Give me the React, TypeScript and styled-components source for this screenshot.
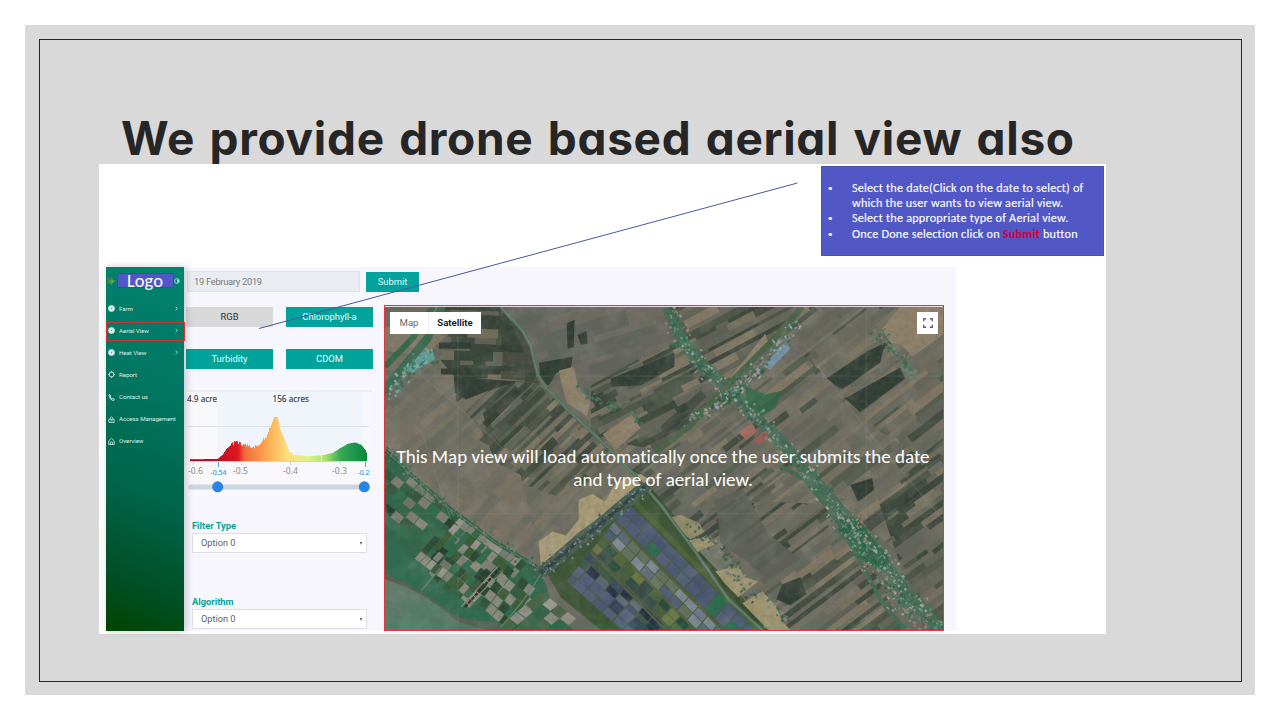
import React from "react";
import styled, { createGlobalStyle, css } from "styled-components";

const Global = createGlobalStyle`
  * { box-sizing: border-box; }
  body { margin: 0; background: #fff; overflow: hidden; }
`;

const calibri = `Carlito, Lato, "Open Sans", sans-serif`;
const ui = `Roboto, sans-serif`;

const Page = styled.div`
  width: 1280px;
  height: 720px;
  padding: 25px;
  background: #fff;
`;
const Slide = styled.main`
  height: 670px;
  padding: 14px 13px 13px 14px;
  background: #d9d9d9;
`;
const Frame = styled.div`
  height: 643px;
  border: 1px solid #262626;
  display: flex;
  flex-direction: column;
  align-items: flex-start;
  padding-left: 59px;
`;
const Title = styled.h1`
  height: 124px;
  margin: 0;
  padding: 68px 0 0 22px;
  font: 700 46px/60px Inter, sans-serif;
  font-feature-settings: "cv11" 1, "ss03" 1;
  letter-spacing: 0.68px;
  word-spacing: 2.8px;
  white-space: nowrap;
  color: #262626;
`;
const Picture = styled.section`
  position: relative;
  width: 1007px;
  height: 470px;
  background: #fff;
`;
const NoteRow = styled.div`
  height: 103px;
  padding: 2px 2px 0 0;
  display: flex;
  justify-content: flex-end;
`;
const Note = styled.ul`
  width: 283px;
  height: 90px;
  margin: 0;
  padding: 13px 0 0 30px;
  border: 1px solid #4a50b4;
  background: #5158c6;
  list-style: none;
  color: #fff;
  font: 400 12.2px/15.2px ${calibri};
  font-variant-ligatures: none;
  letter-spacing: 0.21px;
  -webkit-text-stroke: 0.12px currentColor;
  white-space: nowrap;
`;
const NoteItem = styled.li`
  display: flex;
  margin-left: -24px;
  &::before { content: "•"; width: 24px; flex: none; font-size: 9px; }
`;
const Hot = styled.b`
  color: #d4003c;
`;
const Shell = styled.div`
  display: flex;
  width: 850px;
  height: 364px;
  margin-left: 7px;
  background: #f6f6fc;
`;
const Sidebar = styled.nav`
  width: 78px;
  flex: none;
  background: linear-gradient(202deg, #008472 0%, #007560 35%, #006448 62%, #005028 84%, #004400 100%);
  box-shadow: 2px 0 7px rgba(60, 60, 80, 0.28);
  z-index: 1;
`;
const Brand = styled.div`
  height: 33px;
  display: flex;
  align-items: center;
  padding: 0 4px 6px 0;
  justify-content: space-between;
`;
const LogoBox = styled.div`
  width: 57px;
  height: 15px;
  border: 1px solid #41479c;
  background: #5158c6;
  display: flex;
  align-items: center;
  justify-content: center;
  color: #fff;
  font: 400 18.5px/15px ${calibri};
`;
const NavItem = styled.a<{ $active?: boolean }>`
  height: 19px;
  width: 79px;
  margin-bottom: 3.15px;
  padding: 0 6px 2px 1px;
  display: flex;
  align-items: center;
  border: 1px solid transparent;
  color: #d9efe9;
  font: 400 6.2px/8px ${ui};
  letter-spacing: -0.08px;
  white-space: nowrap;
  ${(p) => p.$active && css`border-color: #d03335;`}
`;
const NavIcon = styled.svg`
  width: 7px;
  height: 7px;
  flex: none;
  margin-right: 4px;
  fill: none;
  stroke: #d9efe9;
`;
const Chevron = styled.svg`
  width: 3px;
  height: 5px;
  margin-left: auto;
  fill: none;
  stroke: #d9efe9;
`;
const Main = styled.div`
  flex: 1;
  display: flex;
  flex-direction: column;
`;
const TopRow = styled.div`
  height: 38px;
  padding: 4px 0 0 3px;
  display: flex;
  gap: 6px;
`;
const DateField = styled.div`
  width: 173px;
  height: 21px;
  padding-left: 6px;
  border: 1px solid #dfe2e6;
  background: #e9edf1;
  color: #75797e;
  font: 400 9.3px/20px ${ui};
  letter-spacing: -0.27px;
`;
const Button = styled.button<{ $muted?: boolean; $width?: number }>`
  width: ${(p) => p.$width ?? 87}px;
  height: 20px;
  padding: 0;
  border: 0;
  background: ${(p) => (p.$muted ? "#d8d8d8" : "#00a29b")};
  color: ${(p) => (p.$muted ? "#333" : "#e9fbfa")};
  font: 400 9.4px/20px ${ui};
`;
const SubmitButton = styled(Button)`
  margin-top: 1px;
`;
const Body = styled.div`
  display: flex;
  height: 326px;
`;
const Controls = styled.div`
  width: 200px;
  flex: none;
  padding: 2px 0 0 2px;
`;
const Buttons = styled.div`
  display: grid;
  grid-template-columns: 87px 87px;
  gap: 22px 13px;
`;
const Chart = styled.svg`
  display: block;
  margin-top: 20px;
  width: 190px;
  height: 112px;
`;
const Field = styled.label`
  display: block;
  width: 175px;
  height: 76px;
  margin-left: 6px;
  padding-top: 18px;
  color: #00a29b;
  font: 700 9.3px/14px ${ui};
`;
const Select = styled.div`
  height: 20px;
  padding: 0 4px 0 8px;
  border: 1px solid #dedfe5;
  display: flex;
  align-items: center;
  justify-content: space-between;
  background: #fff;
  color: #5b6066;
  font: 400 9.2px/18px ${ui};
`;
const Caret = styled.i`
  border: 1.5px solid transparent;
  border-top: 3px solid #444;
  border-bottom: 0;
`;
const MapView = styled.div`
  position: relative;
  width: 560px;
  height: 326px;
  padding-top: 1px;
  border: 1px solid #e0383c;
  background: #ecd9de;
`;
const MapCanvas = styled.svg`
  display: block;
  width: 558px;
  height: 323px;
`;
const MapTypes = styled.div`
  position: absolute;
  left: 5px;
  top: 6px;
  height: 22px;
  display: flex;
  background: #fff;
  color: #666;
  font: 400 9.6px/21px ${ui};
`;
const MapType = styled.span<{ $on?: boolean }>`
  width: ${(p) => (p.$on ? 53 : 38)}px;
  text-align: center;
  ${(p) => p.$on && css`border-left: 1px solid #eee; color: #111; font-weight: 600;`}
`;
const FullScreen = styled.div`
  position: absolute;
  right: 5px;
  top: 6px;
  width: 21px;
  height: 22px;
  display: flex;
  align-items: center;
  justify-content: center;
  background: #fff;
`;
const MapMessage = styled.p`
  position: absolute;
  inset: 139px 2px auto 0;
  margin: 0;
  text-align: center;
  color: #fff;
  font: 400 19px/23px ${calibri};
  font-variant-ligatures: none;
  letter-spacing: 0.02px;
  white-space: nowrap;
`;
const Pointer = styled.svg`
  position: absolute;
  left: 0;
  top: 0;
  width: 1007px;
  height: 470px;
  pointer-events: none;
`;

type Pt = [number, number];
function rng(seed: number) {
  let s = seed;
  return () => {
    s = (s * 1664525 + 1013904223) % 4294967296;
    return s / 4294967296;
  };
}
const str = (p: Pt[]) => p.map((q) => q.join(",")).join(" ");

const earth = ["#716e5f", "#68675c", "#5e6156", "#4c5648", "#3f493f", "#797262", "#867b68", "#6d6b60", "#64665d", "#535b4d"];
const plain = ["#767364", "#6f6e62", "#6e6c64", "#797366", "#676960", "#727063"];
const woods = ["#384339", "#404a3f", "#4b5445", "#66655a", "#374238"];

function Patch({ id, area, angle, colors, seed, base, w = 60, h = 7 }: {
  id: string; area: Pt[]; angle: number; colors: string[]; seed: number; base: string; w?: number; h?: number;
}) {
  const r = rng(seed);
  const cx = area.reduce((a, p) => a + p[0], 0) / area.length;
  const cy = area.reduce((a, p) => a + p[1], 0) / area.length;
  const R = Math.max(...area.map((p) => Math.hypot(p[0] - cx, p[1] - cy)));
  const out: React.ReactNode[] = [];
  let y = -R;
  while (y < R) {
    const hh = h * (0.35 + r() * 0.9);
    let x = -R - r() * w;
    while (x < R) {
      const ww = w * (0.25 + r() * 0.9);
      out.push(<rect key={out.length} x={cx + x} y={cy + y} width={ww} height={hh + 0.3} fill={colors[Math.floor(r() * colors.length)]} />);
      x += ww;
    }
    y += hh;
  }
  return (
    <g clipPath={`url(#${id})`}>
      <clipPath id={id}><polygon points={str(area)} /></clipPath>
      <polygon points={str(area)} fill={base} />
      <g transform={`rotate(${angle} ${cx} ${cy})`} opacity={0.85}>{out}</g>
    </g>
  );
}

function Village({ line, spread, count, colors, seed, size = 3 }: {
  line: Pt[]; spread: number; count: number; colors: string[]; seed: number; size?: number;
}) {
  const r = rng(seed);
  return (
    <g>
      {Array.from({ length: count }, (_, i) => {
        const t = r() * (line.length - 1);
        const k = Math.floor(t);
        const f = t - k;
        const x = line[k][0] + (line[k + 1][0] - line[k][0]) * f + (r() + r() - 1) * spread;
        const y = line[k][1] + (line[k + 1][1] - line[k][1]) * f + (r() + r() - 1) * spread;
        return <rect key={i} x={x} y={y} width={size * (0.4 + r())} height={size * (0.4 + r() * 0.7)} fill={colors[Math.floor(r() * colors.length)]} transform={`rotate(${r() > 0.5 ? -42 : 45} ${x} ${y})`} opacity={0.85} />;
      })}
    </g>
  );
}

function Ponds({ origin, u, v, cols, rows, colors, seed, skip = 0 }: {
  origin: Pt; u: Pt; v: Pt; cols: number; rows: number; colors: string[]; seed: number; skip?: number;
}) {
  const r = rng(seed);
  const cells: React.ReactNode[] = [];
  for (let i = 0; i < cols; i++)
    for (let j = 0; j < rows; j++) {
      if (r() < skip) continue;
      const at = (a: number, b: number): Pt => [origin[0] + u[0] * a + v[0] * b, origin[1] + u[1] * a + v[1] * b];
      cells.push(<polygon key={`${i}-${j}`} points={str([at(i, j), at(i + 0.92, j), at(i + 0.92, j + 0.92), at(i, j + 0.92)])} fill={colors[Math.floor(r() * colors.length)]} />);
    }
  return <g>{cells}</g>;
}

const village = ["#8fa5a0", "#28704f", "#347555", "#a9aba0", "#2b6647", "#6b8d86", "#a97f74", "#547565", "#23614a"];
const northRoad: Pt[] = [[500, 306], [522, 330], [530, 345], [537, 374], [545, 387], [570, 412], [605, 445], [635, 476], [660, 505], [692, 548], [728, 600], [765, 634]];
const mainRoad: Pt[] = [[668, 306], [680, 338], [700, 362], [728, 388], [755, 415], [785, 447], [812, 478], [848, 520], [875, 550], [905, 592], [943, 632]];
const crossRoad: Pt[] = [[802, 306], [772, 340], [730, 382], [690, 425], [655, 452]];
const canal: Pt[] = [[384, 450], [405, 470], [445, 506], [495, 543], [540, 570]];
const dockRoad: Pt[] = [[540, 574], [570, 548], [605, 520], [645, 486]];

const Satellite = () => (
  <MapCanvas viewBox="384 306 559 325" preserveAspectRatio="none">
    <defs>
      <filter id="grain" x="0" y="0" width="100%" height="100%">
        <feTurbulence type="fractalNoise" baseFrequency="0.2" numOctaves="3" seed="8" />
        <feColorMatrix values="0 0 0 0 .1  0 0 0 0 .14  0 0 0 0 .11  1.6 0 0 0 -0.62" />
      </filter>
      <filter id="glint" x="0" y="0" width="100%" height="100%">
        <feTurbulence type="fractalNoise" baseFrequency="0.05" numOctaves="4" seed="21" />
        <feColorMatrix values="0 0 0 0 .6  0 0 0 0 .6  0 0 0 0 .54  1.8 0 0 0 -0.8" />
      </filter>
      <filter id="soft"><feGaussianBlur stdDeviation="0.6" /></filter>
      <linearGradient id="water" x1="0" y1="0" x2="1" y2="0.6">
        <stop offset="0" stopColor="#6c7b6e" /><stop offset=".6" stopColor="#527c69" /><stop offset="1" stopColor="#5c7063" />
      </linearGradient>
    </defs>
    <g filter="url(#soft)">
      <rect x="384" y="306" width="559" height="326" fill="#6a695e" />
      <Patch id="a1" area={[[384, 306], [498, 306], [500, 382], [455, 378], [384, 378]]} angle={2} colors={plain} seed={5} base="#70695a" w={50} h={9} />
      <Patch id="a2" area={[[440, 306], [500, 306], [524, 334], [540, 384], [518, 384], [498, 378], [440, 377]]} angle={2} colors={[...woods, "#6d6757", "#7b735f"]} seed={11} base="#434c40" w={40} h={9} />
      <Patch id="a3" area={[[384, 410], [412, 376], [440, 360], [455, 378], [455, 396], [477, 420], [515, 490], [460, 514], [384, 450]]} angle={-40} colors={plain} seed={3} base="#77705f" w={70} h={8} />
      <Patch id="a4" area={[[455, 378], [540, 383], [570, 412], [620, 462], [560, 500], [505, 480], [480, 430], [455, 400]]} angle={-44} colors={[...woods, ...earth]} seed={17} base="#5d5e51" w={36} h={5} />
      <Patch id="a5" area={[[502, 306], [665, 306], [676, 338], [612, 378], [580, 370], [540, 385]]} angle={-17} colors={["#64655e", "#69675f", "#60645c", "#706d63"]} seed={8} base="#65665d" w={60} h={13} />
      <Patch id="a6" area={[[590, 385], [675, 338], [728, 388], [660, 450], [628, 466], [590, 430]]} angle={-27} colors={[...woods, ...earth]} seed={9} base="#59594d" w={40} h={6} />
      <Patch id="a7" area={[[668, 306], [805, 306], [735, 385], [700, 360]]} angle={-28} colors={[...woods, ...earth]} seed={31} base="#5c5d50" w={40} h={7} />
      <Patch id="a8" area={[[800, 306], [943, 306], [943, 460], [875, 440], [820, 370], [780, 340]]} angle={-38} colors={[...earth, ...plain, "#867b68"]} seed={23} base="#606152" w={50} h={7} />
      <Patch id="a9" area={[[735, 386], [785, 340], [820, 370], [878, 430], [943, 470], [943, 590], [848, 510], [790, 450]]} angle={-38} colors={[...plain, ...plain, ...earth]} seed={40} base="#6b695b" w={60} h={7} />
      <Patch id="a10" area={[[600, 440], [660, 450], [728, 390], [790, 455], [835, 510], [760, 520], [690, 548], [655, 500]]} angle={-38} colors={[...earth, ...plain]} seed={29} base="#66665a" w={50} h={6} />
      <Patch id="a11" area={[[690, 545], [715, 500], [840, 505], [905, 631], [765, 631], [728, 600]]} angle={-37} colors={[...woods, ...earth, ...plain]} seed={60} base="#5c5e51" w={56} h={6} />
      <Patch id="a12" area={[[460, 514], [505, 478], [560, 498], [620, 465], [650, 480], [580, 530], [540, 570]]} angle={-48} colors={plain} seed={14} base="#77705f" w={56} h={8} />
      <Patch id="a13" area={[[384, 450], [455, 514], [400, 465], [470, 450], [520, 475], [540, 560], [495, 542]]} angle={-46} colors={plain} seed={18} base="#77705f" w={60} h={9} />
      <Patch id="a14" area={[[878, 500], [943, 440], [943, 628], [905, 580]]} angle={-36} colors={[...woods, ...earth]} seed={44} base="#5c5d50" w={44} h={6} />

      <polygon points="716,500 742,488 768,534 800,560 765,580 744,560 720,545" fill="#5e6058" opacity=".85" />
      <g fill="#323e35">
        <polygon points="566,322 574,319 573,346 567,348" />
        <polygon points="577,334 586,330 587,343 580,344" />
        <polygon points="440,368 500,368 500,374 440,374" />
        <polygon points="438,342 470,341 470,348 438,348" />
        <polygon points="453,376 468,377 515,381 488,390 465,399 454,392" />
        <polygon points="538,362 572,356 570,368 556,372 548,385 540,380" />
        <polygon points="610,378 650,362 674,352 674,366 640,385 612,386" />
        <polygon points="826,378 868,350 885,342 880,362 842,389" />
        <polygon points="845,398 900,367 905,378 860,412" />
        <polygon points="782,585 800,578 806,595 790,606 776,600" />
        <polygon points="850,485 872,478 874,490 858,502" />
        <polygon points="497,308 515,323 530,345 537,372 532,381 500,378 502,350" opacity=".65" />
        <polygon points="482,413 515,386 519,394 486,428" opacity=".75" />
        <polygon points="478,440 540,385 545,394 490,446" opacity=".55" />
        <polygon points="660,426 700,390 706,396 664,438" opacity=".6" />
        <polygon points="863,522 925,478 929,486 870,532" opacity=".6" />
      </g>
      <g fill="#8f8069">
        <polygon points="558,370 573,366 577,384 590,402 586,416 566,402 562,388" />
        <polygon points="602,434 631,414 640,428 615,450" />
        <polygon points="729,378 765,333 768,342 738,378" />
        <polygon points="882,328 900,306 943,306 943,334 912,356 902,344 890,342" />
        <polygon points="384,326 450,326 450,332 420,356 384,350" opacity=".6" />
      </g>

      <polygon points="384,450 405,470 445,506 495,543 540,570 560,631 384,631" fill="#31664c" />
      <Ponds origin={[392, 462]} u={[9, 7]} v={[-6, 7]} cols={14} rows={6} skip={0.25} seed={12} colors={["#2d5a3f", "#263f31", "#7d7d6f", "#2f6a49", "#8b897c", "#37573f", "#6e7568"]} />
      <Ponds origin={[455, 512]} u={[5.5, 4]} v={[-7, 8]} cols={13} rows={8} skip={0.3} seed={77} colors={["#8b897d", "#2a4636", "#97948a", "#2d6a4c", "#7f8074", "#3b5a36"]} />
      <polygon points="384,500 392,538 425,570 440,588 462,600 470,612 505,612 530,575 545,600 500,631 384,631" fill="#2d6c50" opacity=".9" />
      <Ponds origin={[500, 560]} u={[7, 6]} v={[-6, 8]} cols={6} rows={5} skip={0.15} seed={5} colors={["#2a4a30", "#8b897d", "#3b5a36", "#31573c"]} />
      <Ponds origin={[540, 592]} u={[9, 7]} v={[-8, 7]} cols={5} rows={6} skip={0.1} seed={6} colors={["#8e8e83", "#35634a", "#9a9a90", "#4b6447"]} />
      <path d="M384 574C405 584 425 594 445 610C462 624 480 620 500 624L503 632L384 632Z" fill="#585e54" />
      <path d="M384 580C410 588 430 600 446 614C456 624 470 627 490 632L384 632Z" fill="url(#water)" />
      <path d="M460 608L497 567M467 606L500 574" stroke="#8c8a78" strokeWidth="1.2" />
      <path d="M464 608L499 569" stroke="#26332a" strokeWidth="2.4" strokeDasharray="4 1" />
      <path d="M420 592L440 568M500 628Q525 600 540 575" stroke="#688270" strokeWidth="1.2" fill="none" />

      <polygon points="540,566 538,542 552,532 565,536 578,520 578,500 592,494 604,502 616,482 640,474 650,480 610,510 575,535 553,558" fill="#a89a74" />
      <polygon points="545,572 590,528 645,482 662,506 765,631 600,631 560,598" fill="#3e5436" />
      <polygon points="628,504 755,631 620,631 566,582" fill="#4b5644" />
      <clipPath id="block"><polygon points="628,504 757,631 622,631 566,582" /></clipPath>
      <g clipPath="url(#block)">
        <Ponds origin={[628, 504]} u={[10, 10]} v={[-7, 8]} cols={14} rows={2} seed={91} colors={["#4c5a75", "#455370", "#546078", "#475472", "#4c5a75", "#2c6c50"]} />
        <Ponds origin={[613, 521]} u={[9.5, 9.6]} v={[-6, 7]} cols={14} rows={2} seed={22} colors={["#5d6878", "#6b7485", "#4c5a6f", "#7f8891", "#64705c"]} />
        <Ponds origin={[600, 536]} u={[9, 9]} v={[-6, 6]} cols={14} rows={2} seed={34} colors={["#2c4b3c", "#46603a", "#55663b", "#344c47", "#68763f"]} />
        <Ponds origin={[587, 550]} u={[9.5, 9.5]} v={[-6, 7]} cols={12} rows={2} seed={55} colors={["#27334a", "#3c4966", "#5c6672", "#25313e", "#3b5644", "#505d78"]} />
        <Ponds origin={[575, 564]} u={[10, 9]} v={[-8, 8]} cols={11} rows={3} seed={66} colors={["#4c5875", "#55607a", "#364259", "#4b5872", "#2c5148"]} />
        <path d="M612 520L722 631M600 534L695 631M586 549L665 631" stroke="#535f3a" strokeWidth="2.3" />
      </g>
      <path d="M635 503L758 631" stroke="#4b5f36" strokeWidth="5" />
      <path d="M648 490L762 628" stroke="#364b2a" strokeWidth="7" opacity=".8" />
      <g fill="#a0956f">
        <polygon points="669,518 680,515 698,523 704,532 690,540 678,530" opacity=".85" />
        <polygon points="688,541 706,537 714,545 696,553" />
        <polygon points="715,572 738,566 744,578 758,582 738,598 725,585" />
        <polygon points="742,604 762,592 775,606 782,622 790,631 768,631" />
      </g>
      <polygon points="698,551 716,545 732,562 718,572" fill="#737668" />

      <polygon points="384,382 425,333 437,306 445,306 430,340 384,395" fill="#3b6a53" />
      <polygon points="405,370 420,352 432,350 434,358 408,374" fill="#5fa09a" />
      <Village line={[[388, 395], [405, 370], [430, 352]]} spread={10} count={70} colors={["#78b4ae", "#2d6b50", "#4f8f82", "#3b6b52", "#9aa59a"]} seed={4} />
      <polyline points="384,366 412,337 432,306" stroke="#35674b" strokeWidth="6" fill="none" />

      <g fill="none" strokeLinejoin="round">
        <polyline points={str(northRoad)} stroke="#526f5e" strokeWidth="3.4" />
        <polyline points={str(northRoad)} stroke="#7d8c7b" strokeWidth=".8" />
        <polyline points={str(mainRoad)} stroke="#3f6c56" strokeWidth="12" opacity=".7" />
        <polyline points="780,466 805,480 835,518 858,558 880,600 905,631" stroke="#466a55" strokeWidth="4" />
        <polyline points={str(crossRoad)} stroke="#4c6246" strokeWidth="6" />
        <polyline points={str(canal)} stroke="#2f5f46" strokeWidth="4" />
        <polyline points={str(canal)} stroke="#61806b" strokeWidth="1" />
        <polyline points={str(dockRoad)} stroke="#495e52" strokeWidth="12" />
        <polyline points={str(dockRoad)} stroke="#323f47" strokeWidth="3.5" />
        <path d="M800 338L822 372L875 440L943 520M412 368L455 404L520 465M712 410L740 440M420 430L450 520" stroke="#8a8570" strokeWidth=".8" opacity=".6" />
        <path d="M384 375.500H943M384 514H943M457 306V631M866 306V631" stroke="#a3a698" strokeWidth=".5" opacity=".35" />
      </g>
      <polygon points="746,386 765,394 782,390 775,408 760,416 745,402" fill="#2b6846" opacity=".8" />
      <polygon points="840,530 858,520 890,560 880,572 862,560" fill="#32664b" />
      <polygon points="763,366 785,341 790,348 770,369" fill="#7792ab" />
      <polygon points="738,432 752,423 756,431 746,440" fill="#a4685b" />
      <polygon points="752,440 766,430 768,437 760,444" fill="#9c5a55" />
      <Village line={mainRoad} spread={11} count={620} colors={village} seed={2} size={2.6} />
      <Village line={[[690, 420], [730, 392], [760, 365], [795, 322]]} spread={9} count={230} colors={[...village, "#8fa5c0", "#a9a8b8"]} seed={16} size={2.6} />
      <Village line={[[835, 515], [865, 550], [890, 590], [925, 631]]} spread={16} count={320} colors={village} seed={19} size={2.6} />
      <Village line={dockRoad} spread={9} count={180} colors={["#77859a", "#385b45", "#55684b", "#8e979f", "#324d3b"]} seed={13} size={2.4} />
      <Village line={[[640, 430], [630, 410], [600, 400], [575, 385]]} spread={5} count={40} colors={["#2f6a4b", "#4c7c66", "#3b6a50"]} seed={26} />
      <Village line={canal} spread={7} count={180} colors={["#2e6649", "#78857a", "#3b7556", "#8a7c74"]} seed={37} size={2.4} />
      <Village line={[[872, 328], [885, 340], [900, 355], [915, 378]]} spread={8} count={70} colors={["#2f6a4b", "#4c7c66", "#3b6a50", "#70887a"]} seed={38} />
      <Village line={[[690, 523], [725, 555], [745, 590], [790, 620]]} spread={9} count={90} colors={["#2f5a44", "#6c7c86", "#43674f", "#8e8a7a"]} seed={39} />
    </g>
    <rect x="384" y="306" width="559" height="325" filter="url(#grain)" opacity=".38" />
    <rect x="384" y="306" width="559" height="325" filter="url(#glint)" opacity=".16" />
  </MapCanvas>
);

const shape: Pt[] = [[190, 459.3], [217, 459], [222, 455], [226, 449], [231, 444.5], [236, 442], [240, 444], [246, 446], [250, 447.5], [257, 447], [262, 441], [267, 435], [271, 424], [274, 417], [277, 417], [280, 430], [285, 441], [289, 452], [294, 455], [305, 456], [320, 455.5], [332, 453], [340, 448], [348, 443.5], [355, 442.5], [361, 445], [365, 450], [367, 455]];
function histogram() {
  const r = rng(9);
  let d = "M190 461";
  for (let x = 190; x < 367; x++) {
    const k = shape.findIndex((p, i) => i < shape.length - 1 && x >= p[0] && x < shape[i + 1][0]);
    const [a, b] = [shape[k], shape[k + 1]];
    let y = a[1] + ((b[1] - a[1]) * (x - a[0])) / (b[0] - a[0]);
    if (x > 230 && x < 272) y += (r() - 0.6) * 3.5;
    if (x === 321) y = 461;
    d += `L${x} ${y.toFixed(1)}H${x + 1}`;
  }
  return d + "V461Z";
}

const Label = ({ x, y, w, children }: { x: number; y: number; w: number; children: string }) => (
  <text x={x} y={y} textLength={w} lengthAdjust="spacingAndGlyphs">{children}</text>
);

const Histogram = () => (
  <Chart viewBox="186 389 190 112">
    <defs>
      <linearGradient id="scale" gradientUnits="userSpaceOnUse" x1="190" y1="0" x2="367" y2="0">
        <stop offset="0" stopColor="#a50026" /><stop offset=".17" stopColor="#c0102a" /><stop offset=".27" stopColor="#e0161d" />
        <stop offset=".31" stopColor="#f4693c" /><stop offset=".46" stopColor="#fdb55a" /><stop offset=".55" stopColor="#fede7d" />
        <stop offset=".67" stopColor="#dcf38b" /><stop offset=".77" stopColor="#a2de6a" /><stop offset=".85" stopColor="#36a856" /><stop offset="1" stopColor="#08873d" />
      </linearGradient>
    </defs>
    <rect x="186" y="390" width="184" height="106" fill="#f8f8fb" />
    <rect x="217.5" y="392" width="146" height="69" fill="#eff5fa" />
    <path d="M187 391H372M187 426.5H369" stroke="#dfe3e8" />
    <path d={histogram()} fill="url(#scale)" />
    <path d="M189 461.5H367M193.5 461V465M241.5 461V465M290.5 461V465M340.5 461V465" stroke="#c9c9cc" strokeWidth=".8" />
    <path d="M218.5 462V467M365.5 462V467" stroke="#3fa9e0" />
    <g fontFamily="'Noto Sans', sans-serif" fontSize="8.6">
      <g fill="#3c3c3c" stroke="#3c3c3c" strokeWidth=".15"><Label x={187} y={402} w={30}>4.9 acre</Label><Label x={272.5} y={402} w={36.5}>156 acres</Label></g>
      <g fill="#8b8b8b">
        <Label x={188} y={474} w={15}>-0.6</Label><Label x={233} y={474} w={15}>-0.5</Label>
        <Label x={283} y={474} w={15}>-0.4</Label><Label x={332} y={474} w={15}>-0.3</Label>
      </g>
      <g fill="#36a5de" stroke="#36a5de" strokeWidth=".15" fontSize="7.8"><Label x={210.5} y={474.5} w={16}>-0.54</Label><Label x={357.5} y={474.5} w={12}>-0.2</Label></g>
    </g>
    <rect x="188" y="484.5" width="180" height="5" rx="2.5" fill="#cbd5dd" />
    <circle cx="217.7" cy="486.8" r="5.5" fill="#2985e0" />
    <circle cx="364.3" cy="486.8" r="5.5" fill="#2985e0" />
  </Chart>
);

const Compass = () => <><circle cx="5" cy="5" r="4.3" fill="#d9efe9" /><path d="M3.8 6.200L4.700 4.500L6.400 3.700L5.500 5.500Z" fill="#00705f" stroke="none" /></>;
const Ring = () => <><circle cx="5" cy="5" r="3.5" strokeWidth="1.3" /><path d="M5 0V2M5 8V10M0 5H2M8 5H10" strokeWidth="1" /></>;
const Phone = () => <path d="M1.200 1.400L2.500 .8L4 3L3.200 4.200Q4 6 6 7L7 6.200L9.200 7.600L8.400 9.200Q3 9.500 1.200 1.400Z" strokeWidth="1.3" />;
const Lock = () => <path d="M1.200 4.800H8.800V9.200H1.200ZM3 4.800V2.800Q5 -.5 7 2.800V4.800M3.500 7H6.500" strokeWidth="1.1" />;
const Home = () => <path d="M1 4.200L5 .8L9 4.200V9.300H1ZM3.500 9V5.800H6.500V9" strokeWidth="1.1" />;

const nav: { label: string; icon: React.FC; more?: boolean; active?: boolean }[] = [
  { label: "Farm", icon: Compass, more: true },
  { label: "Aerial View", icon: Compass, more: true, active: true },
  { label: "Heat View", icon: Compass, more: true },
  { label: "Report", icon: Ring },
  { label: "Contact us", icon: Phone },
  { label: "Access Management", icon: Lock },
  { label: "Overview", icon: Home },
];

export default function App() {
  return (
    <Page>
      <Global />
      <Slide>
        <Frame>
          <Title>We provide drone based aerial view also</Title>
          <Picture>
            <NoteRow>
              <Note>
                <NoteItem><span>Select the date(Click on the date to select) of<br />which the user wants to view aerial view.</span></NoteItem>
                <NoteItem><span>Select the appropriate type of Aerial view.</span></NoteItem>
                <NoteItem><span>Once Done selection click on <Hot>Submit</Hot> button</span></NoteItem>
              </Note>
            </NoteRow>
            <Shell>
              <Sidebar>
                <Brand>
                  <svg width="10" height="12" viewBox="0 0 11 12">
                    <path d="M1 3L5 5L6 1L8 5L11 5L8 8L6 11L4 8L1 9L3 6Z" fill="#3f9a4a" />
                    <path d="M2 2L5 5L3 6Z" fill="#b5533c" /><path d="M6 5L9 6L6 8Z" fill="#8da044" />
                  </svg>
                  <LogoBox>Logo</LogoBox>
                  <svg width="6" height="6" viewBox="0 0 6 6"><circle cx="3" cy="3" r="2.3" fill="none" stroke="#9fd0dc" /><path d="M3 1.500H5V4.500H3Z" fill="#9fd0dc" /></svg>
                </Brand>
                {nav.map(({ label, icon: Icon, more, active }) => (
                  <NavItem key={label} $active={active}>
                    <NavIcon viewBox="0 0 10 10"><Icon /></NavIcon>
                    {label}
                    {more && <Chevron viewBox="0 0 3 5"><path d="M.6 .8L2.300 2.500L.6 4.200" strokeWidth=".8" /></Chevron>}
                  </NavItem>
                ))}
              </Sidebar>
              <Main>
                <TopRow>
                  <DateField>19 February 2019</DateField>
                  <SubmitButton $width={53}>Submit</SubmitButton>
                </TopRow>
                <Body>
                  <Controls>
                    <Buttons>
                      <Button $muted>RGB</Button>
                      <Button>Chlorophyll-a</Button>
                      <Button>Turbidity</Button>
                      <Button>CDOM</Button>
                    </Buttons>
                    <Histogram />
                    <Field>Filter Type<Select>Option 0<Caret /></Select></Field>
                    <Field>Algorithm<Select>Option 0<Caret /></Select></Field>
                  </Controls>
                  <MapView>
                    <Satellite />
                    <MapTypes><MapType>Map</MapType><MapType $on>Satellite</MapType></MapTypes>
                    <FullScreen>
                      <svg width="10" height="10" viewBox="0 0 10 10" fill="none" stroke="#666" strokeWidth="1.4"><path d="M.7 3.200V.7H3.200M6.800 .7H9.300V3.200M9.300 6.800V9.300H6.800M3.200 9.300H.7V6.800" /></svg>
                    </FullScreen>
                    <MapMessage>This Map view will load automatically once the user submits the date<br />and type of aerial view.</MapMessage>
                  </MapView>
                </Body>
              </Main>
            </Shell>
            <Pointer viewBox="0 0 1007 470"><path d="M160 164.500L698.500 19" stroke="#4a56a3" strokeWidth="1" /></Pointer>
          </Picture>
        </Frame>
      </Slide>
    </Page>
  );
}
